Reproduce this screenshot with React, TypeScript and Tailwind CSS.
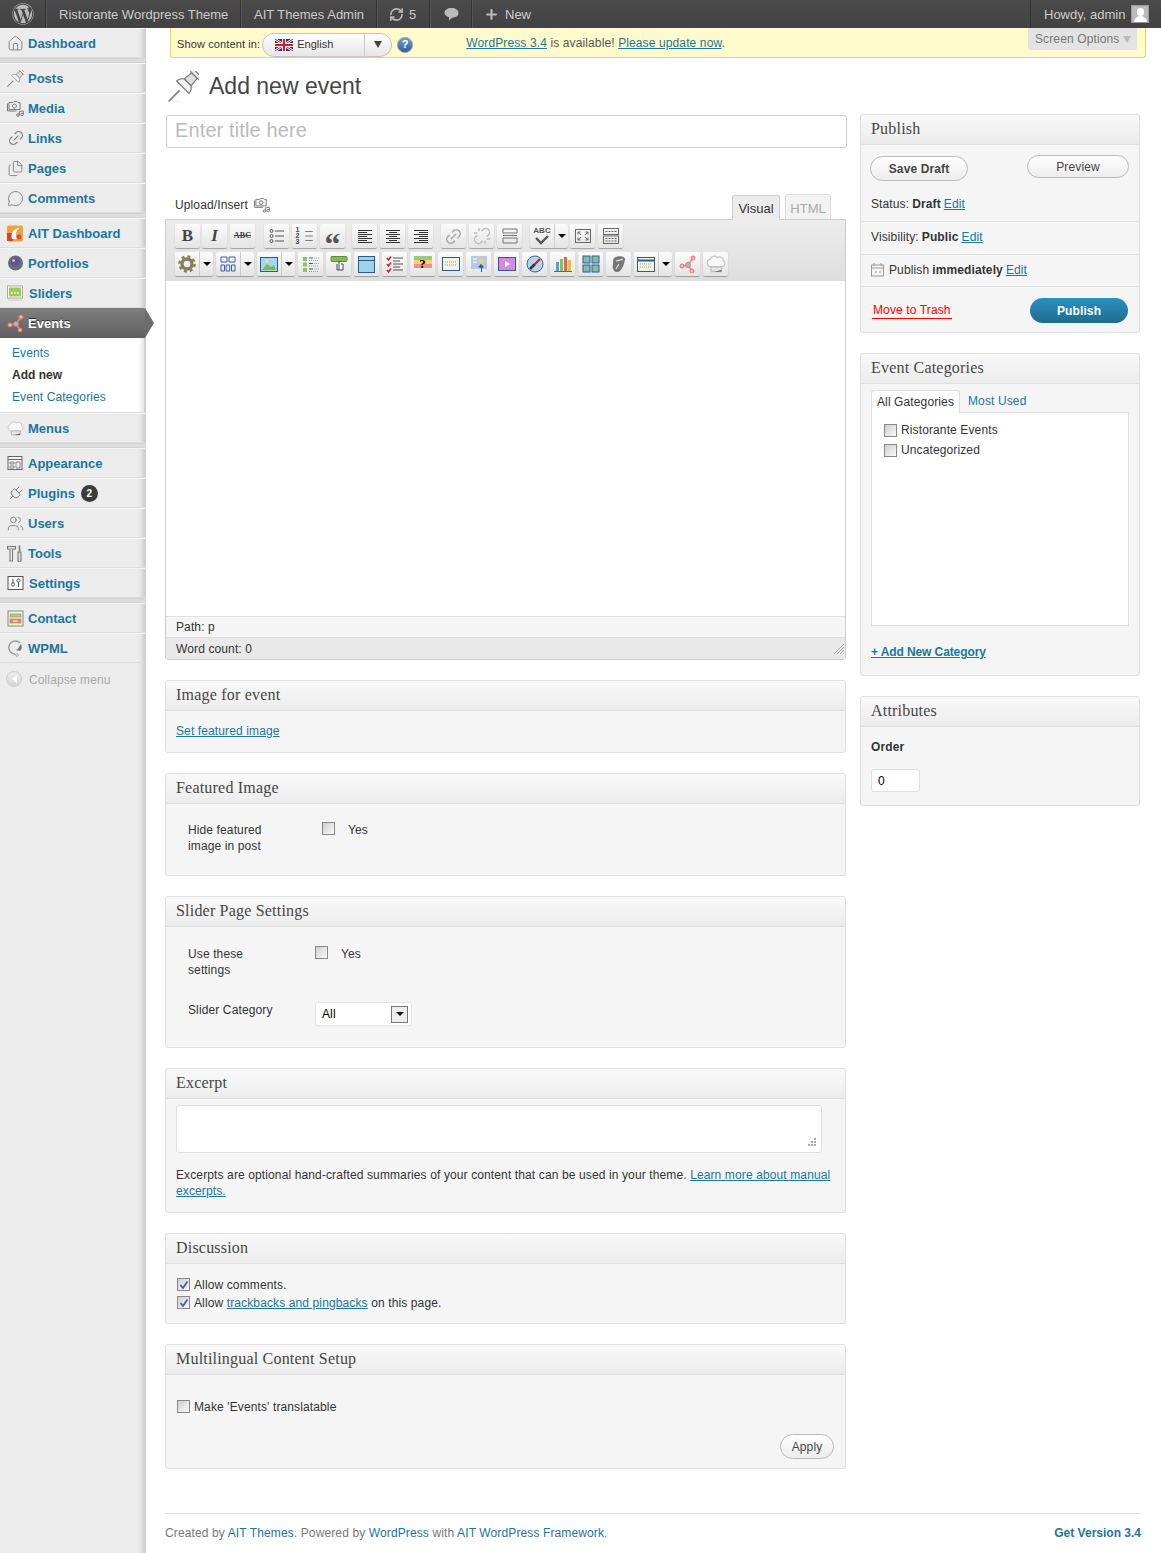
import { ReactNode } from 'react';
import { FaWordpress } from 'react-icons/fa';
import {
  Files,
  House,
  Link2,
  MessageCircle,
  Plug,
  Plus,
  RefreshCw,
  Unlink,
  Users,
} from 'lucide-react';

const grey = { size: 17, color: '#777', strokeWidth: 1.2 };

function Pushpin({ size = 17 }: { size?: number }) {
  return (
    <svg width={size} height={size} viewBox="0 0 32 32" fill="none">
      <path d="M0.5 31.5 L12 20" stroke="#8a8a8a" strokeWidth="2" />
      <path d="M1 32 H14" stroke="#ddd" />
      <g transform="rotate(45 16 16)" stroke="#777" strokeWidth="1.2">
        <rect x="9.5" y="-4" width="13" height="4" rx="2" fill="#eee" />
        <path d="M12 0 H20 L21 10 H11 Z" fill="#dcdcdc" />
        <path d="M11 10 H21 C24 12 25 15 25 17 H7 C7 15 8 12 11 10 Z" fill="#f2f2f2" />
      </g>
    </svg>
  );
}

function MediaIcon({ size = 17 }: { size?: number }) {
  return (
    <svg width={size} height={size} viewBox="0 0 17 17" fill="none" stroke="#777" strokeWidth="1">
      <path d="M2 2.5h4l1-1h3l1 1h2v7H2z" fill="#f2f2f2" />
      <path d="M0.5 3.5v7.5h9" />
      <circle cx="7.5" cy="6" r="2" />
      <circle cx="11" cy="15" r="1.3" />
      <circle cx="15" cy="14.5" r="1.3" />
      <path d="M12.3 15V11.5L16.3 11V14.5" />
    </svg>
  );
}

function ToolsIcon() {
  return (
    <svg width="17" height="17" viewBox="0 0 17 17" fill="none" stroke="#777" strokeWidth="1.1">
      <path d="M0.5 1.5h8v2.5h-8z" fill="#eee" />
      <path d="M3 4v12h2.5V4" fill="#f5f5f5" />
      <path d="M12.5 0.5v6" strokeWidth="1.6" />
      <path d="M11 7h3v8.5a1.5 1.5 0 0 1-3 0z" fill="#ddd" />
    </svg>
  );
}

function HatIcon({ size = 17 }: { size?: number }) {
  return (
    <svg width={size} height={size} viewBox="0 0 17 17">
      <path d="M4 11 C0.5 10 0 5 3.5 4.5 C4.5 1.5 8 1 9.5 3 C12 1.5 15 3 14.5 5.5 C17 6.5 16.5 10 13.5 11 Z" fill="#f7f7f7" stroke="#c4c4c4" />
      <path d="M4 11 H13.5 L13 15 H4.5 Z" fill="#e4e4e4" stroke="#bbb" />
      <path d="M7 15 L13 13.5 V15 Z" fill="#666" />
    </svg>
  );
}

function Nodes({ size = 18 }: { size?: number }) {
  return (
    <svg width={size} height={size} viewBox="0 0 18 18" fill="none">
      <path d="M3 11 L9 10 L14 3 M9 10 L13 16" stroke="#f08a78" strokeWidth="1.6" />
      <circle cx="3" cy="11" r="2" fill="#fbb" stroke="#ee7060" />
      <circle cx="14" cy="3" r="2" fill="#fbb" stroke="#ee7060" />
      <circle cx="13" cy="16" r="2" fill="#fbb" stroke="#ee7060" />
      <circle cx="9" cy="10" r="2.5" fill="#8cc4e8" stroke="#ee7060" />
    </svg>
  );
}

function AitIcon() {
  return (
    <svg width="17" height="17" viewBox="0 0 17 17">
      <rect width="16" height="16" y="0.5" rx="2" fill="#f2a23c" />
      <rect x="0" y="8" width="6" height="8" fill="#d8452c" />
      <path d="M5 14 C3 8 8 2 13 3 C9 5 8 9 10 14 Z" fill="#fff" />
      <circle cx="12" cy="12" r="2.5" fill="#e0502e" />
    </svg>
  );
}

function PortfolioIcon() {
  return (
    <svg width="17" height="17" viewBox="0 0 17 17">
      <circle cx="8.5" cy="8" r="7.5" fill="#5d7378" />
      <circle cx="8" cy="7" r="4.5" fill="#6d4d96" />
      <circle cx="6.5" cy="5.5" r="1.5" fill="#c9b6e2" />
    </svg>
  );
}

function SliderIcon() {
  return (
    <svg width="17" height="17" viewBox="0 0 17 17">
      <rect x="0.5" y="1" width="15" height="12" fill="#fff" stroke="#aaa" />
      <rect x="2" y="2.5" width="12" height="9" fill="#9dcb5a" />
      <path d="M4 8h1.5M7 8h1.5M10 8h1.5" stroke="#fff" strokeWidth="1.5" />
      <path d="M1 15h14" stroke="#ccc" />
    </svg>
  );
}

function AppearanceIcon() {
  return (
    <svg width="16" height="16" viewBox="0 0 16 16" fill="none" stroke="#666">
      <rect x="1" y="1.5" width="14" height="13" fill="#f5f5f5" />
      <path d="M1 4.5h14" />
      <path d="M3 7h4v2H3zM3 11h4v2H3zM9 7h4v6H9z" strokeWidth="0.8" />
    </svg>
  );
}

function SettingsIcon() {
  return (
    <svg width="17" height="17" viewBox="0 0 17 17" fill="none" stroke="#555">
      <rect x="1" y="1.5" width="15" height="13" fill="#fafafa" />
      <circle cx="6" cy="9.5" r="1.6" />
      <path d="M6 4v4" />
      <circle cx="11.5" cy="5.5" r="1.6" />
      <path d="M11.5 7v5" />
    </svg>
  );
}

function ContactIcon() {
  return (
    <svg width="17" height="17" viewBox="0 0 17 17" stroke="#888">
      <rect x="1" y="1" width="15" height="15" fill="#f3f1d4" />
      <rect x="3" y="4" width="11" height="3" fill="#b5cf7a" strokeWidth="0.6" />
      <rect x="3" y="9" width="11" height="4" fill="#e8866a" strokeWidth="0.6" />
      <path d="M6 11h5" stroke="#fff" />
    </svg>
  );
}

function WpmlIcon() {
  return (
    <svg width="17" height="17" viewBox="0 0 17 17" fill="none">
      <path d="M13 3 A6.5 6.5 0 1 0 8 14" stroke="#999" strokeWidth="1.4" />
      <path d="M14 4 A6 6 0 0 1 13 11 L9 10 C12 9 12 6 14 4Z" fill="#777" />
      <circle cx="10" cy="15" r="1.3" stroke="#aaa" />
    </svg>
  );
}

type MenuEntry = { label: string; icon: ReactNode; sep?: boolean; active?: boolean; badge?: string; nudge?: boolean };

const menu: MenuEntry[] = [
  { label: 'Dashboard', icon: <House {...grey} />, sep: true },
  { label: 'Posts', icon: <Pushpin /> },
  { label: 'Media', icon: <MediaIcon /> },
  { label: 'Links', icon: <Link2 size={18} color="#888" strokeWidth={1.7} className="-rotate-45" /> },
  { label: 'Pages', icon: <Files {...grey} /> },
  { label: 'Comments', icon: <MessageCircle {...grey} />, sep: true },
  { label: 'AIT Dashboard', icon: <AitIcon /> },
  { label: 'Portfolios', icon: <PortfolioIcon /> },
  { label: 'Sliders', icon: <SliderIcon />, nudge: true },
  { label: 'Events', icon: <Nodes />, active: true },
  { label: 'Menus', icon: <HatIcon />, sep: true },
  { label: 'Appearance', icon: <AppearanceIcon /> },
  { label: 'Plugins', icon: <Plug {...grey} className="rotate-45" />, badge: '2' },
  { label: 'Users', icon: <Users {...grey} /> },
  { label: 'Tools', icon: <ToolsIcon /> },
  { label: 'Settings', icon: <SettingsIcon />, sep: true, nudge: true },
  { label: 'Contact', icon: <ContactIcon /> },
  { label: 'WPML', icon: <WpmlIcon /> },
];

function Sidebar() {
  return (
    <aside className="w-[146px] shrink-0 bg-[#ececec] border-r border-[#d5d5d5] shadow-[inset_-5px_0_5px_-3px_rgba(0,0,0,0.18)]">
      {menu.map((item) => (
        <div key={item.label}>
          {item.active ? (
            <>
              <div className="relative h-[30px] flex items-center bg-gradient-to-b from-[#808080] to-[#5e5e5e]">
                <span className="w-[28px] pl-[7px] shrink-0">{item.icon}</span>
                <span className="pt-[2px] text-[13px] font-bold tracking-normal text-white [text-shadow:0_-1px_0_#333]">{item.label}</span>
                <span className="absolute left-full top-0 w-0 h-0 border-y-[15px] border-y-transparent border-l-[9px] border-l-[#6c6c6c]" />
              </div>
              <div className="h-[75px] bg-white border-b border-[#ddd] pt-[4px] mr-[1px] shadow-[inset_-5px_0_5px_-3px_rgba(0,0,0,0.12)]">
                <a className="flex items-center h-[22px] pl-[12px] text-[#21759b]">Events</a>
                <a className="flex items-center h-[22px] pl-[12px] font-bold tracking-normal text-[#333]">Add new</a>
                <a className="flex items-center h-[22px] pl-[12px] text-[#21759b]">Event Categories</a>
              </div>
            </>
          ) : (
            <div className="h-[30px] flex items-center border-t border-[#f7f7f7] border-b border-b-[#dcdcdc]">
              <span className={`${item.nudge ? 'w-[29px]' : 'w-[28px]'} pl-[7px] shrink-0`}>{item.icon}</span>
              <span className="pt-[2px] text-[13px] font-bold tracking-normal text-[#21759b]">{item.label}</span>
              {item.badge && (
                <span className="ml-[6px] w-[17px] h-[17px] rounded-full bg-[#3a3a3a] text-white text-[10px] font-bold flex items-center justify-center">
                  {item.badge}
                </span>
              )}
            </div>
          )}
          {item.sep && <div className="h-[5px] bg-[#dcdcdc] border-y border-[#d2d2d2]" />}
        </div>
      ))}
      <div className="h-[32px] flex items-center pl-[6px] text-[#aaa]">
        <span className="w-[16px] h-[16px] rounded-full bg-gradient-to-b from-[#eee] to-[#d5d5d5] border border-[#ccc] flex items-center justify-center mr-[7px]">
          <span className="w-0 h-0 border-y-[4px] border-y-transparent border-r-[5px] border-r-white" />
        </span>
        <span className="pt-[2px]">Collapse menu</span>
      </div>
    </aside>
  );
}

function AdminBar() {
  const cell = 'h-full flex items-center border-r border-[#333] shadow-[1px_0_0_#555]';
  return (
    <header className="h-[28px] flex justify-between bg-gradient-to-b from-[#4a4a4a] to-[#424242] text-[#ccc] text-[13px] tracking-normal">
      <div className="flex h-full">
        <div className={`${cell} w-[46px] pl-[12px]`}>
          <FaWordpress size={22} color="#bbb" />
        </div>
        <div className={`${cell} w-[195px] pl-[13px] pt-[2px]`}>Ristorante Wordpress Theme</div>
        <div className={`${cell} w-[136px] pl-[13px] pt-[2px]`}>AIT Themes Admin</div>
        <div className={`${cell} w-[53px] pl-[12px] gap-[5px]`}>
          <RefreshCw size={15} color="#bbb" strokeWidth={2.6} />
          <span className="pt-[2px]">5</span>
        </div>
        <div className={`${cell} w-[42px] pl-[14px]`}>
          <svg width="15" height="14" viewBox="0 0 15 14">
            <path d="M7.5 1 C11.5 1 14.5 3 14.5 6 C14.5 9 11.5 10.5 8.5 10.5 L5 13.5 L5 10.2 C2.5 9.5 .5 8 .5 6 C.5 3 3.5 1 7.5 1Z" fill="#bbb" />
          </svg>
        </div>
        <div className="h-full flex items-center pl-[12px] gap-[6px]">
          <Plus size={15} color="#bbb" strokeWidth={3.4} />
          <span className="pt-[2px]">New</span>
        </div>
      </div>
      <div className="h-full w-[131px] flex items-center pl-[13px] gap-[6px] border-l border-[#333]">
        <span className="pt-[2px]">Howdy, admin</span>
        <span className="w-[18px] h-[18px] bg-[#bbb] border border-[#999] relative overflow-hidden">
          <span className="absolute left-[5px] top-[2px] w-[7px] h-[8px] rounded-full bg-white" />
          <span className="absolute left-[2px] top-[10px] w-[13px] h-[9px] rounded-t-full bg-white" />
        </span>
      </div>
    </header>
  );
}

function Flag() {
  return (
    <svg width="18" height="12" viewBox="0 0 18 12">
      <rect width="18" height="12" fill="#21357e" />
      <path d="M0 0L18 12M18 0L0 12" stroke="#fff" strokeWidth="2.4" />
      <path d="M0 0L18 12M18 0L0 12" stroke="#cf1b2b" strokeWidth="1" />
      <path d="M9 0V12M0 6H18" stroke="#fff" strokeWidth="4" />
      <path d="M9 0V12M0 6H18" stroke="#cf1b2b" strokeWidth="2.2" />
    </svg>
  );
}

function Notice() {
  return (
    <div className="relative ml-[5px] w-[976px] h-[30px] flex items-center bg-[#fffbcc] border border-t-0 border-[#e6db55] rounded-b-[3px] pl-[6px] text-[11px] text-[#333]">
      <span className="pt-[3px]">Show content in:</span>
      <div className="ml-[2px] mt-[4px] w-[130px] h-[24px] flex items-center rounded-full border border-[#c4c4c4] bg-gradient-to-b from-white to-[#e6e6e6]">
        <span className="w-[101px] pl-[12px] flex items-center gap-[4px]">
          <Flag />
          <span className="text-[11px] tracking-normal">English</span>
        </span>
        <span className="flex-1 h-full border-l border-[#ccc] flex items-center justify-center">
          <span className="w-0 h-0 border-x-[4px] border-x-transparent border-t-[7px] border-t-[#444]" />
        </span>
      </div>
      <span className="ml-[5px] mt-[4px] w-[16px] h-[16px] rounded-full bg-gradient-to-b from-[#6f9fcf] to-[#2d5f99] border border-[#999] text-white text-[11px] font-bold flex items-center justify-center">
        ?
      </span>
      <p className="ml-[53px] pt-[1px] text-[12px] text-[#555]">
        <a className="text-[#21759b] underline">WordPress 3.4</a> is available! <a className="text-[#21759b] underline">Please update now</a>.
      </p>
      <div className="absolute top-0 left-[857px] w-[109px] h-[22px] bg-[#e3e3e3] rounded-b-[3px] flex items-center pl-[7px] gap-[4px] text-[12px] text-[#777]">
        Screen Options
        <span className="w-0 h-0 border-x-[4px] border-x-transparent border-t-[7px] border-t-[#bbb]" />
      </div>
    </div>
  );
}

function Box({ title, className, children }: { title: string; className: string; children: ReactNode }) {
  return (
    <section className={`border border-[#dfdfdf] rounded-[3px] bg-[#f5f5f5] mb-[20px] ${className}`}>
      <h3 className="h-[30px] flex items-center pl-[10px] pb-[1px] bg-gradient-to-b from-[#f9f9f9] to-[#ececec] border-b border-[#dfdfdf] rounded-t-[3px] font-['Liberation_Serif',serif] text-[16px] tracking-[0.2px] text-[#464646]">
        {title}
      </h3>
      {children}
    </section>
  );
}

function Check({ checked }: { checked?: boolean }) {
  return (
    <span className="w-[13px] h-[13px] shrink-0 border border-[#888] bg-gradient-to-br from-[#cfcfcf] to-[#fafafa] flex items-center justify-center">
      {checked && (
        <svg width="10" height="10" viewBox="0 0 10 10" fill="none">
          <path d="M1.5 5 L4 8 L8.5 1.5" stroke="#4a5f9a" strokeWidth="1.8" />
        </svg>
      )}
    </span>
  );
}

function Pill({ className, children }: { className: string; children: ReactNode }) {
  return (
    <span className={`flex items-center justify-center rounded-full border border-[#bbb] bg-gradient-to-b from-white to-[#ececec] text-[#464646] ${className}`}>
      {children}
    </span>
  );
}

function TB({ children, className = '' }: { children?: ReactNode; className?: string }) {
  return (
    <span className={`w-[25px] h-[24px] shrink-0 flex items-center justify-center rounded-[2px] bg-gradient-to-b from-[#fbfbfb] to-[#e4e4e4] shadow-[0_1px_1px_rgba(0,0,0,0.3)] ${className}`}>
      {children}
    </span>
  );
}

function TBSplit({ children, className = '' }: { children: ReactNode; className?: string }) {
  return (
    <span className={`w-[38px] h-[24px] shrink-0 flex items-center rounded-[2px] bg-gradient-to-b from-[#fbfbfb] to-[#e4e4e4] shadow-[0_1px_1px_rgba(0,0,0,0.3)] ${className}`}>
      <span className="w-[25px] flex items-center justify-center border-r border-[#ccc] h-full">{children}</span>
      <span className="flex-1 flex justify-center">
        <span className="w-0 h-0 border-x-[4px] border-x-transparent border-t-[4px] border-t-black" />
      </span>
    </span>
  );
}

function Ico({ children, stroke = '#555' }: { children: ReactNode; stroke?: string }) {
  return (
    <svg width="18" height="18" viewBox="0 0 18 18" fill="none" stroke={stroke}>
      {children}
    </svg>
  );
}

const lines = (rows: [number, number][]) =>
  rows.map(([x, w], i) => <path key={i} d={`M${x} ${3.5 + i * 2}h${w}`} stroke="#333" />);

function Toolbar() {
  return (
    <div className="h-[61px] bg-gradient-to-b from-[#ececec] to-[#dedede] border-b border-[#ddd] pl-[9px] pt-[4px] flex flex-col gap-[4px]">
      <div className="flex gap-[3px]">
        <TB><b className="font-['Liberation_Serif',serif] text-[17px] text-[#444]">B</b></TB>
        <TB className="ml-[-1px]"><i className="font-['Liberation_Serif',serif] font-bold text-[17px] text-[#444]">I</i></TB>
        <TB><span className="font-['Liberation_Serif',serif] font-bold text-[8px] text-[#444] line-through">ABC</span></TB>
        <TB className="ml-[6px]">
          <Ico>
            <circle cx="3.5" cy="4" r="1.5" /><circle cx="3.5" cy="9" r="1.5" /><circle cx="3.5" cy="14" r="1.5" />
            <path d="M7 4h9M7 9h9M7 14h9" />
          </Ico>
        </TB>
        <TB>
          <span className="relative w-[18px] h-[18px] flex">
            <span className="w-[6px] text-[7px] leading-[6px] font-bold text-[#444] flex flex-col"><span>1</span><span>2</span><span>3</span></span>
            <Ico><path d="M7 3h10M7 9h10M7 15h10" /></Ico>
          </span>
        </TB>
        <TB><b className="font-['Liberation_Serif',serif] text-[32px] leading-[40px] h-[24px] text-[#555]">“</b></TB>
        <TB className="ml-[4px]"><Ico>{lines([[2, 14], [2, 9], [2, 14], [2, 9], [2, 14], [2, 9], [2, 14]])}</Ico></TB>
        <TB><Ico>{lines([[2, 14], [5, 8], [2, 14], [5, 8], [2, 14], [5, 8], [2, 14]])}</Ico></TB>
        <TB><Ico>{lines([[2, 14], [7, 9], [2, 14], [7, 9], [2, 14], [7, 9], [2, 14]])}</Ico></TB>
        <TB className="ml-[5px]"><Link2 size={19} color="#aaa" strokeWidth={2} className="-rotate-45" /></TB>
        <TB><Unlink size={18} color="#bbb" strokeWidth={1.8} /></TB>
        <TB>
          <Ico stroke="#777"><path d="M2 2h14v4H2zM2 8.5h14M2 11h14v5H2z" /></Ico>
        </TB>
        <TBSplit className="ml-[5px]">
          <span className="flex flex-col items-center leading-none">
            <span className="text-[8px] font-bold text-[#555] h-[8px]">ABC</span>
            <svg width="18" height="10" viewBox="0 0 18 10" fill="none"><path d="M3 3 L8 8 L15 1" stroke="#555" strokeWidth="2.4" /></svg>
          </span>
        </TBSplit>
        <TB className="ml-[-1px]"><Ico stroke="#666"><rect x="1.5" y="2.5" width="15" height="13" /><path d="M4 5l3 3M4 5h2.5M4 5v2.5M14 5l-3 3M14 5h-2.5M14 5v2.5M4 13l3-3M4 13h2.5M4 13v-2.5M14 13l-3-3M14 13h-2.5M14 13v-2.5" /></Ico></TB>
        <TB><Ico stroke="#666"><rect x="1.5" y="1.5" width="15" height="6" /><rect x="1.5" y="9" width="15" height="7.5" /><path d="M3.5 4.5h11M3.5 11.5h11M3.5 14h11" strokeDasharray="2 1" /></Ico></TB>
      </div>
      <div className="flex gap-[3px]">
        <TBSplit>
          <svg width="18" height="18" viewBox="0 0 18 18"><circle cx="9" cy="9" r="5" fill="none" stroke="#8b7d5c" strokeWidth="3.4" /><circle cx="9" cy="9" r="7.6" fill="none" stroke="#8b7d5c" strokeWidth="2.4" strokeDasharray="3 3" /></svg>
        </TBSplit>
        <TBSplit>
          <Ico stroke="#3b5fa8"><path d="M2 2h6v5H2zM10 2h6v5h-6zM2 10h3.5v6H2zM7.2 10h3.5v6H7.2zM12.5 10H16v6h-3.5z" /></Ico>
        </TBSplit>
        <TBSplit>
          <svg width="18" height="15" viewBox="0 0 18 15"><rect x=".5" y=".5" width="17" height="14" fill="#a8d8ee" stroke="#2c5a96" /><path d="M2 13 L7 7 L11 10 L14 8 L16 13Z" fill="#7fb84e" /><circle cx="7" cy="4" r="1.5" fill="#f3e37a" /></svg>
        </TBSplit>
        <TB>
          <svg width="18" height="18" viewBox="0 0 18 18"><path d="M1 2h4v4H1zM1 7.5h4v4H1zM1 13h4v4H1z" fill="#8fc06a" /><path d="M7 3h4M7 8.5h4M7 14h4" stroke="#2c5a96" /><path d="M12 3h5M7 5.5h10M12 8.5h5M7 11h10M12 14h5M7 16.5h10" stroke="#999" strokeDasharray="1 1" /></svg>
        </TB>
        <TB>
          <svg width="18" height="18" viewBox="0 0 18 18"><rect x="1" y="1.5" width="16" height="5" rx="1" fill="#86b85a" stroke="#5a8a3a" /><path d="M9 6v9M7 9v6h6V9H11" stroke="#444" fill="#fff" /></svg>
        </TB>
        <TB>
          <svg width="17" height="17" viewBox="0 0 17 17"><rect x=".5" y=".5" width="16" height="16" fill="#9ed3ea" stroke="#2c5a96" /><path d="M1 4.5h15" stroke="#2c5a96" /></svg>
        </TB>
        <TB>
          <svg width="18" height="18" viewBox="0 0 18 18" fill="none"><path d="M1 3l1.5 2L5 1.5M1 9l1.5 2L5 7.5M1 15l1.5 2L5 13.5" stroke="#d02020" strokeWidth="1.5" /><path d="M7 3h10M7 6h7M7 9h10M7 12h7M7 15h10" stroke="#555" /></svg>
        </TB>
        <TB>
          <span className="relative w-[18px] h-[16px] flex flex-col">
            <span className="h-[4px] bg-[#9ccc7a]" />
            <span className="h-[4px] bg-[#f3d66a]" />
            <span className="h-[4px] bg-[#f09090]" />
            <span className="absolute inset-0 flex items-center justify-center text-[13px] font-bold text-black font-['Liberation_Serif',serif]">?</span>
          </span>
        </TB>
        <TB>
          <svg width="18" height="14" viewBox="0 0 18 14"><rect x=".5" y=".5" width="17" height="13" fill="#f5f2df" stroke="#2c5a96" /><path d="M3 5h12M3 8h12" stroke="#999" strokeDasharray="1 1" /></svg>
        </TB>
        <TB>
          <svg width="18" height="18" viewBox="0 0 18 18"><rect x="1" y="1" width="16" height="13" fill="#b8c8e8" /><path d="M3 4h4M3 7h4" stroke="#fff" /><circle cx="11" cy="6" r="2.5" fill="#f3d25a" /><path d="M11 9 L8 12 L11 13 L11 17 L12 17 L12 13 L14 12Z" fill="#2c5a96" /></svg>
        </TB>
        <TB>
          <svg width="18" height="14" viewBox="0 0 18 14"><rect x=".5" y=".5" width="17" height="13" fill="#d58ae0" stroke="#2c5a96" /><path d="M7 4l5 3-5 3Z" fill="#fff" /></svg>
        </TB>
        <TB>
          <svg width="18" height="18" viewBox="0 0 18 18"><circle cx="9" cy="9" r="8" fill="#b8d4ea" stroke="#3b68a0" /><path d="M4 14 L9 9" stroke="#333" strokeWidth="2.6" /><path d="M9 9 L14 4" stroke="#e01020" strokeWidth="2.2" /></svg>
        </TB>
        <TB>
          <svg width="18" height="17" viewBox="0 0 18 17"><rect x="2" y="6" width="3" height="9" fill="#46a8c4" /><rect x="6" y="3" width="3" height="12" fill="#8bbf4e" /><rect x="10" y="1" width="3" height="14" fill="#e86060" /><rect x="14" y="4" width="3" height="11" fill="#f0c030" /><path d="M0 15.5h18" stroke="#666" /></svg>
        </TB>
        <TB>
          <svg width="18" height="18" viewBox="0 0 18 18" fill="#7fbfa0" stroke="#2c5aa6"><rect x="1" y="1" width="7" height="7" /><rect x="10" y="1" width="7" height="7" /><rect x="1" y="10" width="7" height="7" /><rect x="10" y="10" width="7" height="7" /></svg>
        </TB>
        <TB>
          <svg width="16" height="18" viewBox="0 0 16 18"><path d="M3 3 C7 0 15 1 14 5 C13 9 11 17 6 17 C2 17 1 12 2 9 C2 6 2 5 3 3Z" fill="#777" /><path d="M5 6 C8 5 11 5 12 4 M8 9 L5 14" stroke="#ddd" strokeWidth="1.2" fill="none" /></svg>
        </TB>
        <TBSplit>
          <svg width="18" height="15" viewBox="0 0 18 15"><rect x=".5" y=".5" width="17" height="14" fill="#f5f2df" stroke="#2c5a96" /><path d="M1 3.5h16" stroke="#2c5a96" strokeWidth="2" /><path d="M3 7h12M3 10h12" stroke="#999" strokeDasharray="1 1" /></svg>
        </TBSplit>
        <TB><Nodes /></TB>
        <TB><HatIcon size={20} /></TB>
      </div>
    </div>
  );
}

function LeftColumn() {
  return (
    <div className="w-[681px] shrink-0">
      <div className="ml-[1px] mt-[1px] h-[33px] w-[681px] flex items-center border border-[#ccc] rounded-[3px] pl-[8px] pb-[3px] bg-white text-[20px] text-[#bbb]">
        Enter title here
      </div>
      <div className="mt-[46px] h-[25px] flex items-end justify-between pl-[10px] pr-[15px]">
        <span className="flex items-center gap-[6px] h-[21px] mb-[4px] text-[12px] text-[#333]">
          Upload/Insert
          <MediaIcon size={16} />
        </span>
        <div className="flex gap-[5px] text-[13px] tracking-normal">
          <span className="w-[48px] h-[25px] flex items-center justify-center pt-[1px] bg-[#ececec] border border-b-0 border-[#ccc] rounded-t-[3px] text-[#333] relative top-[1px]">Visual</span>
          <span className="w-[46px] h-[25px] flex items-center justify-center pt-[3px] bg-[#f2f2f2] border border-b-0 border-[#dfdfdf] rounded-t-[3px] text-[#aaa]">HTML</span>
        </div>
      </div>
      <div className="h-[441px] flex flex-col border border-[#ccc] rounded-b-[3px] mb-[20px]">
        <Toolbar />
        <div className="flex-1 bg-white" />
        <div className="h-[21px] flex items-center pl-[10px] bg-[#f5f5f5] border-t border-[#dfdfdf]">
          Path: p
        </div>
        <div className="h-[22px] flex items-center justify-between pl-[10px] bg-[#e9e9e9] border-t border-[#dfdfdf]">
          Word count: 0
          <svg width="12" height="12" viewBox="0 0 12 12" stroke="#aaa"><path d="M1 11L11 1M4 11L11 4M7 11L11 7M10 11L11 10" /></svg>
        </div>
      </div>

      <Box title="Image for event" className="h-[73px]">
        <div className="pl-[10px] pt-[11px]">
          <a className="text-[#21759b] underline">Set featured image</a>
        </div>
      </Box>

      <Box title="Featured Image" className="h-[103px]">
        <div className="flex pl-[22px] pt-[18px] leading-[16px]">
          <span className="w-[134px]">Hide featured<br />image in post</span>
          <Check />
          <span className="ml-[13px]">Yes</span>
        </div>
      </Box>

      <Box title="Slider Page Settings" className="h-[152px]">
        <div className="flex pl-[22px] pt-[19px] leading-[16px]">
          <span className="w-[127px]">Use these<br />settings</span>
          <Check />
          <span className="ml-[13px]">Yes</span>
        </div>
        <div className="flex pl-[22px] pt-[24px]">
          <span className="w-[127px] mt-[-1px]">Slider Category</span>
          <span className="w-[97px] h-[24px] flex items-center justify-between pl-[6px] pr-[3px] bg-white border border-[#e5e5e5] rounded-[3px] text-black">
            All
            <span className="w-[17px] h-[17px] border border-[#777] bg-[#eee] flex items-center justify-center">
              <span className="w-0 h-0 border-x-[4px] border-x-transparent border-t-[4px] border-t-black" />
            </span>
          </span>
        </div>
      </Box>

      <Box title="Excerpt" className="h-[145px]">
        <div className="px-[10px] pt-[6px]">
          <div className="h-[48px] w-[646px] flex items-end justify-end pr-[5px] pb-[5px] bg-white border border-[#dfdfdf] rounded-[3px]">
            <svg width="10" height="10" viewBox="0 0 10 10" fill="#aaa"><rect x="8" y="1" width="2" height="2" /><rect x="5" y="4" width="2" height="2" /><rect x="8" y="4" width="2" height="2" /><rect x="2" y="7" width="2" height="2" /><rect x="5" y="7" width="2" height="2" /><rect x="8" y="7" width="2" height="2" /></svg>
          </div>
          <p className="mt-[14px] w-[660px] leading-[16px]">
            Excerpts are optional hand-crafted summaries of your content that can be used in your theme.{' '}
            <a className="text-[#21759b] underline">Learn more about manual excerpts.</a>
          </p>
        </div>
      </Box>

      <Box title="Discussion" className="h-[91px]">
        <div className="pl-[11px] pt-[14px] flex flex-col gap-[5px]">
          <label className="flex items-center gap-[4px] h-[13px]"><Check checked /> Allow comments.</label>
          <label className="flex items-center gap-[4px] h-[13px]">
            <Check checked />
            <span>Allow <a className="text-[#21759b] underline">trackbacks and pingbacks</a> on this page.</span>
          </label>
        </div>
      </Box>

      <Box title="Multilingual Content Setup" className="h-[125px]">
        <label className="pl-[11px] pt-[25px] flex items-center gap-[4px] h-[38px]"><Check /> Make 'Events' translatable</label>
        <div className="flex justify-end pr-[11px] mt-[21px]">
          <Pill className="w-[54px] h-[25px]">Apply</Pill>
        </div>
      </Box>
    </div>
  );
}

function RightColumn() {
  return (
    <div className="w-[280px] shrink-0">
      <Box title="Publish" className="h-[219px] mt-0">
        <div className="h-[44px] flex items-start justify-between pl-[9px] pr-[10px]">
          <Pill className="mt-[11px] w-[98px] h-[25px] font-bold">Save Draft</Pill>
          <Pill className="mt-[10px] w-[102px] h-[23px]">Preview</Pill>
        </div>
        <div className="h-[33px] flex items-center gap-[3px] pl-[10px] pb-[3px] border-b border-[#dfdfdf]">
          Status: <b className="text-[#333]">Draft</b> <a className="text-[#21759b] underline">Edit</a>
        </div>
        <div className="h-[33px] flex items-center gap-[3px] pl-[10px] pb-[2px] border-b border-[#dfdfdf]">
          Visibility: <b className="text-[#333]">Public</b> <a className="text-[#21759b] underline">Edit</a>
        </div>
        <div className="h-[32px] flex items-center gap-[3px] pl-[10px] pb-[2px] border-b border-[#dfdfdf]">
          <svg className="mr-[1px]" width="14" height="14" viewBox="0 0 14 14" fill="none" stroke="#999"><rect x=".5" y="2" width="12" height="11" /><path d="M.5 5h12M3 0v3M10 0v3M4 9h2M8 9h2" /></svg>
          Publish <b className="text-[#333]">immediately</b> <a className="text-[#21759b] underline">Edit</a>
        </div>
        <div className="h-[45px] flex items-center justify-between pl-[11px] pr-[11px] pt-[2px]">
          <a className="text-[#f00] border-b border-[#f00] px-[1px] leading-[15px]">Move to Trash</a>
          <span className="w-[98px] h-[25px] flex items-center justify-center rounded-full bg-gradient-to-b from-[#2a90c2] to-[#1f6c8e] text-white font-bold">Publish</span>
        </div>
      </Box>

      <Box title="Event Categories" className="h-[323px]">
        <div className="px-[10px] pt-[5px]">
          <div className="flex items-end">
            <span className="h-[23px] w-[89px] flex items-center justify-center bg-white border border-b-0 border-[#dfdfdf] rounded-t-[3px] relative top-[1px]">All Gategories</span>
            <a className="ml-[8px] h-[23px] flex items-center text-[#21759b]">Most Used</a>
          </div>
          <div className="h-[214px] w-[258px] bg-white border border-[#dfdfdf] pl-[12px] pt-[7px]">
            <label className="flex items-center gap-[4px] h-[20px]"><Check /> Ristorante Events</label>
            <label className="flex items-center gap-[4px] h-[20px]"><Check /> Uncategorized</label>
          </div>
          <a className="block mt-[17px] font-bold tracking-[-0.1px] text-[#21759b] underline">+ Add New Category</a>
        </div>
      </Box>

      <Box title="Attributes" className="h-[110px]">
        <div className="px-[10px] pt-[11px]">
          <b className="block text-[#333]">Order</b>
          <span className="mt-[13px] w-[49px] h-[23px] flex items-center pl-[6px] bg-white border border-[#dfdfdf] rounded-[3px] text-black">0</span>
        </div>
      </Box>
    </div>
  );
}

export default function App() {
  return (
    <div className="w-[1161px] min-h-[1553px] flex flex-col bg-white font-['Liberation_Sans',sans-serif] text-[12px] tracking-[0.12px] text-[#333]">
      <AdminBar />
      <div className="flex flex-1">
        <Sidebar />
        <main className="flex-1 min-w-0 pl-[19px]">
          <Notice />
          <div className="h-[56px] flex items-center gap-[10px] pl-[3px] pt-[1px]">
            <Pushpin size={31} />
            <h1 className="text-[23px] tracking-normal text-[#464646]">Add new event</h1>
          </div>
          <div className="flex gap-[14px]">
            <LeftColumn />
            <RightColumn />
          </div>
          <footer className="mt-[24px] w-[976px] h-[29px] flex items-end justify-between border-t border-[#dfdfdf] text-[#777]">
            <p>
              Created by <a className="text-[#21759b]">AIT Themes</a>. Powered by <a className="text-[#21759b]">WordPress</a> with <a className="text-[#21759b]">AIT WordPress Framework</a>.
            </p>
            <a className="font-bold tracking-normal text-[#21759b]">Get Version 3.4</a>
          </footer>
        </main>
      </div>
    </div>
  );
}
